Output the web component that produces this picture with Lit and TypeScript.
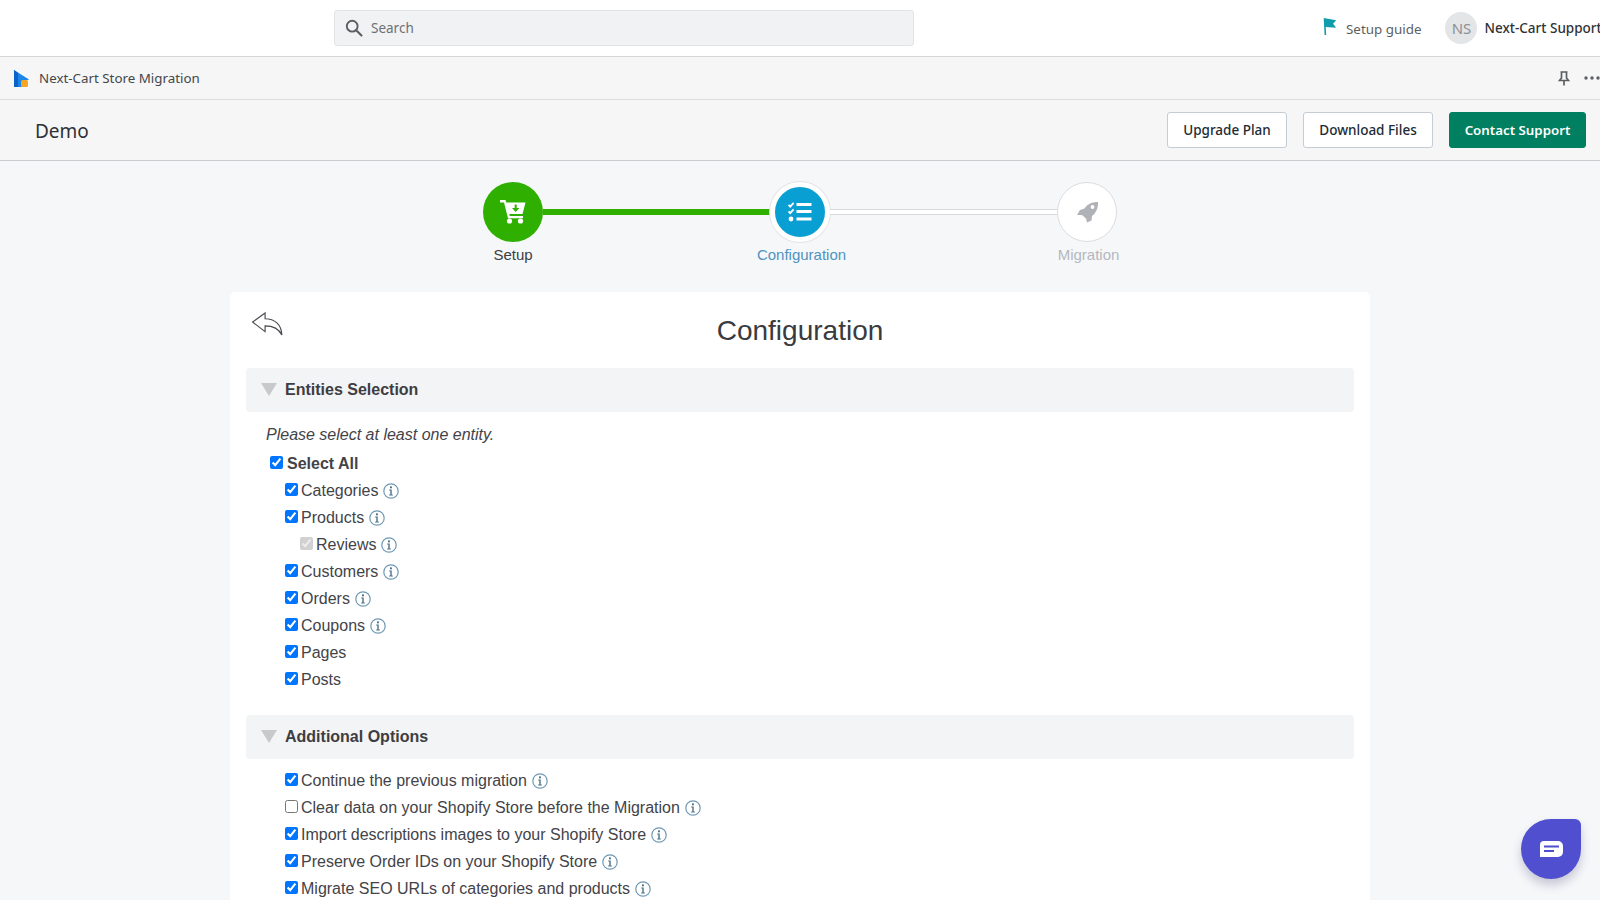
import { LitElement, html, css } from "lit";
import { customElement } from "lit/decorators.js";

const info = html`<svg class="info" viewBox="0 0 16 16" aria-hidden="true">
  <circle cx="8" cy="8" r="7.2" fill="none" stroke="#6f98b3" stroke-width="1.2"></circle>
  <rect x="7" y="3.4" width="1.9" height="1.9" fill="#4a7088"></rect>
  <path d="M6.2 6.6H8.7V11.5H9.8V12.4H6.2V11.5H7.3V7.5H6.2Z" fill="#4a7088"></path>
</svg>`;

const triangle = html`<svg class="tri" viewBox="0 0 16 13" aria-hidden="true"><path d="M0 0H16L8 13Z" fill="#c8c9ca"></path></svg>`;

type Row = { label: string; checked: boolean; level: number; info: boolean; disabled?: boolean };

const entities: Row[] = [
  { label: "Categories", checked: true, level: 1, info: true },
  { label: "Products", checked: true, level: 1, info: true },
  { label: "Reviews", checked: true, level: 2, info: true, disabled: true },
  { label: "Customers", checked: true, level: 1, info: true },
  { label: "Orders", checked: true, level: 1, info: true },
  { label: "Coupons", checked: true, level: 1, info: true },
  { label: "Pages", checked: true, level: 1, info: false },
  { label: "Posts", checked: true, level: 1, info: false },
];

const options: Row[] = [
  { label: "Continue the previous migration", checked: true, level: 1, info: true },
  { label: "Clear data on your Shopify Store before the Migration", checked: false, level: 1, info: true },
  { label: "Import descriptions images to your Shopify Store", checked: true, level: 1, info: true },
  { label: "Preserve Order IDs on your Shopify Store", checked: true, level: 1, info: true },
  { label: "Migrate SEO URLs of categories and products", checked: true, level: 1, info: true },
];

@customElement("app-root")
export class AppRoot extends LitElement {
  static styles = css`
    :host {
      display: block;
      width: 1600px;
      height: 900px;
      overflow: hidden;
      position: relative;
      background: #f6f7f9;
      font-family: "Liberation Sans", Arial, sans-serif;
      color: #434348;
    }
    .ui { font-family: "Noto Sans", "Open Sans", sans-serif; }
    .topbar {
      display: flex;
      align-items: center;
      height: 56px;
      background: #fff;
      border-bottom: 1px solid #d5d6d8;
      padding-left: 334px;
      white-space: nowrap;
    }
    .search {
      width: 580px;
      height: 36px;
      box-sizing: border-box;
      flex: none;
      display: flex;
      align-items: center;
      gap: 8px;
      padding-left: 10px;
      background: #f1f2f3;
      border: 1px solid #e1e3e5;
      border-radius: 3px;
      font-size: 13.5px;
      color: #6d7175;
    }
    .search svg { width: 18px; height: 18px; }
    .guide {
      display: flex;
      align-items: center;
      margin-left: 408px;
      gap: 9px;
      font-size: 13.4px;
      color: #5c5f62;
    }
    .guide svg { width: 15px; height: 17px; margin-top: -3px; }
    .guide span { margin-top: 2px; }
    .avatar {
      width: 32px;
      height: 32px;
      margin-left: 24px;
      border-radius: 50%;
      background: #e4e5e7;
      color: #8c9196;
      font-size: 15px;
      display: flex;
      align-items: center;
      justify-content: center;
      flex: none;
    }
    .user { margin-left: 7px; font-size: 13.5px; color: #303236; font-weight: 500; }
    .appbar {
      display: flex;
      align-items: center;
      height: 42px;
      background: #f6f6f7;
      border-bottom: 1px solid #dcddde;
      padding-left: 14px;
      font-size: 13.35px;
      color: #44474a;
    }
    .appbar .logo { width: 15px; height: 17px; margin-right: 10px; }
    .appbar .name { flex: 1; }
    .appbar .pin { width: 12px; height: 15px; margin-right: 14px; }
    .appbar .dots { width: 16px; height: 4px; flex: none; }
    .demobar {
      display: flex;
      align-items: center;
      gap: 16px;
      height: 61px;
      box-sizing: border-box;
      background: #f6f6f7;
      border-bottom: 1px solid #c9cccf;
      padding: 0 14px 1px 35px;
    }
    .demobar .title { flex: 1; font-size: 19px; color: #2f3135; margin-top: 2px; }
    .btn {
      height: 36px;
      box-sizing: border-box;
      display: flex;
      align-items: center;
      justify-content: center;
      background: #fff;
      border: 1px solid #c4cdd5;
      border-radius: 3px;
      font-size: 13.5px;
      font-weight: 500;
      color: #212b36;
    }
    .btn.up { width: 120px; }
    .btn.dl { width: 130px; }
    .btn.primary {
      width: 137px;
      background: #008060;
      border-color: #008060;
      color: #fff;
      font-weight: 600;
      font-size: 13.3px;
    }
    .stepper {
      display: grid;
      grid-template-columns: 60px 227px 60px 227px 60px;
      justify-content: center;
      align-items: center;
      padding-top: 21px;
      height: 131px;
      box-sizing: border-box;
      align-content: start;
      row-gap: 4px;
    }
    .circle {
      width: 60px;
      height: 60px;
      box-sizing: border-box;
      border-radius: 50%;
      display: flex;
      align-items: center;
      justify-content: center;
    }
    .circle.done { background: #2fb000; }
    .circle.now { background: #0a9fd2; border: 5px solid #fff; box-shadow: 0 0 0 1px #e2e3e5; }
    .circle.next { background: #fff; border: 1px solid #dcdde0; }
    .line.green { height: 6px; background: #2fb000; }
    .line.grey { height: 6px; box-sizing: border-box; background: #fff; border-top: 1px solid #d9dadc; border-bottom: 1px solid #d9dadc; }
    .lab { justify-self: center; font-size: 15px; white-space: nowrap; line-height: 18px; }
    .lab.l1 { grid-column: 1; color: #3d3d42; }
    .lab.l2 { grid-column: 3; color: #4f93c0; margin-left: 3px; }
    .lab.l3 { grid-column: 5; color: #b4b7bf; margin-left: 3px; }
    .card {
      margin: 0 230px;
      height: 700px;
      box-sizing: border-box;
      background: #fff;
      border-radius: 5px;
      padding: 0 16px;
    }
    .head {
      display: grid;
      grid-template-columns: 1fr auto 1fr;
      height: 76px;
    }
    .head svg { width: 33px; height: 24px; margin: 20px 0 0 5px; }
    .head h1 { margin: 22px 0 0; font-size: 28px; font-weight: 400; line-height: 34px; color: #3a3a3f; }
    .section {
      height: 44px;
      display: flex;
      align-items: center;
      gap: 8px;
      padding-left: 15px;
      background: #f3f4f5;
      border-radius: 4px;
      font-size: 16px;
      font-weight: 700;
      color: #3d3d42;
    }
    .tri { width: 16px; height: 13px; margin-top: -1px; }
    .list { padding: 8px 0 23px; }
    .list.first { padding-bottom: 22px; }
    .note { font-style: italic; font-size: 16px; line-height: 29px; height: 30px; padding-left: 20px; }
    .row {
      display: flex;
      align-items: center;
      height: 27px;
      font-size: 16px;
    }
    .row input {
      width: 13px;
      height: 13px;
      margin: 0 3px 0 0;
      flex: none;
      position: relative;
      top: -1px;
    }
    .row.l0 { padding-left: 24px; font-weight: 700; }
    .row.l0 input { margin-right: 4px; }
    .row.l1 { padding-left: 39px; }
    .row.l2 { padding-left: 54px; }
    .info { width: 16px; height: 16px; margin-left: 5px; flex: none; }
    .chat {
      position: absolute;
      left: 1521px;
      top: 819px;
      width: 60px;
      height: 60px;
      border-radius: 50% 6px 50% 50%;
      background: #4f4fd0;
      box-shadow: 0 6px 10px rgba(60, 60, 110, 0.25);
      display: flex;
      align-items: center;
      justify-content: center;
    }
    .chat svg { width: 23px; height: 16px; }
  `;

  private row(r: Row) {
    return html`<label class="row l${r.level}">
      <input type="checkbox" .checked=${r.checked} ?disabled=${r.disabled} />${r.label}${r.info ? info : ""}
    </label>`;
  }

  render() {
    return html`
      <div class="topbar ui">
        <div class="search">
          <svg viewBox="0 0 18 18" aria-hidden="true"><circle cx="7.2" cy="7.2" r="5.4" fill="none" stroke="#5c5f62" stroke-width="1.9"></circle><path d="M11.2 11.2 16.5 16.5" stroke="#5c5f62" stroke-width="2.1" stroke-linecap="round"></path></svg>
          Search
        </div>
        <div class="guide">
          <svg viewBox="0 0 15 19" aria-hidden="true"><path d="M1 0 15 2.500 11.500 6.500 15 11 3.300 10 3.800 19H2Z" fill="#0f9dab"></path></svg>
          <span>Setup guide</span>
        </div>
        <div class="avatar">NS</div>
        <div class="user">Next-Cart Support</div>
      </div>
      <div class="appbar ui">
        <svg class="logo" viewBox="0 0 15 17" aria-hidden="true"><path d="M0 0 15 9.500 9 12 8 17H0Z" fill="#1a86e8"></path><path d="M0 0V17H4V3Z" fill="#0b63c9"></path><rect x="7" y="10" width="7" height="7" rx="1.500" fill="#f5a623"></rect></svg>
        <span class="name">Next-Cart Store Migration</span>
        <svg class="pin" viewBox="0 0 12 15" aria-hidden="true"><path d="M2.500 1H9.500M3.500 1V7L1.500 9.500H10.500L8.500 7V1M6 9.500V14.500" fill="none" stroke="#5c5f62" stroke-width="1.700"></path></svg>
        <svg class="dots" viewBox="0 0 16 4" aria-hidden="true"><circle cx="2" cy="2" r="1.700" fill="#5c5f62"></circle><circle cx="8" cy="2" r="1.700" fill="#5c5f62"></circle><circle cx="14" cy="2" r="1.700" fill="#5c5f62"></circle></svg>
      </div>
      <div class="demobar ui">
        <div class="title">Demo</div>
        <div class="btn up">Upgrade Plan</div>
        <div class="btn dl">Download Files</div>
        <div class="btn primary">Contact Support</div>
      </div>
      <div class="stepper">
        <div class="circle done">
          <svg width="26" height="24" viewBox="0 0 26 24" aria-hidden="true">
            <path d="M0 0H5.500L6.300 2.500H25.500L22.500 14H9.200L9.800 16H23V18.200H8L4 2.500H0Z" fill="#fff"></path>
            <circle cx="9.500" cy="21" r="2.600" fill="#fff"></circle><circle cx="20.500" cy="21" r="2.600" fill="#fff"></circle>
            <path d="M14.700 4.500V8H12L15.700 12 19.400 8H16.700V4.500Z" fill="#2fb000"></path>
          </svg>
        </div>
        <div class="line green"></div>
        <div class="circle now">
          <svg width="24" height="20" viewBox="0 0 24 20" aria-hidden="true">
            <path d="M.5 3 2.200 4.700 5.600.8M.5 9.500 2.200 11.200 5.600 7.300" fill="none" stroke="#fff" stroke-width="1.800"></path>
            <circle cx="3" cy="17" r="2.400" fill="#fff"></circle>
            <rect x="8.500" y="1" width="15" height="3" fill="#fff"></rect><rect x="8.500" y="8" width="15" height="3" fill="#fff"></rect><rect x="8.500" y="15.500" width="15" height="3" fill="#fff"></rect>
          </svg>
        </div>
        <div class="line grey"></div>
        <div class="circle next">
          <svg width="21" height="21" viewBox="0 0 21 21" aria-hidden="true">
            <path fill-rule="evenodd" d="M21 0C21.500 6 19 11 15 14L14.500 18.500 10 20.500 9 16.500 5 13 0 13 3 8 7.500 6.500C10.500 2 15 0 21 0ZM15.500 3.100A1.900 1.900 0 1 0 15.500 6.900 1.900 1.900 0 1 0 15.500 3.100Z" fill="#b1b2b8"></path>
          </svg>
        </div>
        <div class="lab l1">Setup</div>
        <div class="lab l2">Configuration</div>
        <div class="lab l3">Migration</div>
      </div>
      <div class="card">
        <div class="head">
          <svg viewBox="0 0 33 25" aria-hidden="true"><path d="M1 10.500 14 1V7C24 7 31 13 31.500 24 28 17 23 14.500 14 14.500V20.500Z" fill="#fff" stroke="#4a4a50" stroke-width="1.200" stroke-linejoin="miter"></path></svg>
          <h1>Configuration</h1>
          <div></div>
        </div>
        <div class="section">${triangle}Entities Selection</div>
        <div class="list first">
          <div class="note">Please select at least one entity.</div>
          <label class="row l0"><input type="checkbox" checked />Select All</label>
          ${entities.map((r) => this.row(r))}
        </div>
        <div class="section">${triangle}Additional Options</div>
        <div class="list">${options.map((r) => this.row(r))}</div>
      </div>
      <div class="chat">
        <svg viewBox="0 0 23 16" aria-hidden="true"><path d="M4 0H18A5 5 0 0 1 23 5V11A5 5 0 0 1 18 16H0V4A4 4 0 0 1 4 0Z" fill="#fff"></path><rect x="4" y="4.500" width="15" height="2" fill="#4f4fd0"></rect><rect x="4" y="9" width="10" height="2" fill="#4f4fd0"></rect></svg>
      </div>
    `;
  }
}
